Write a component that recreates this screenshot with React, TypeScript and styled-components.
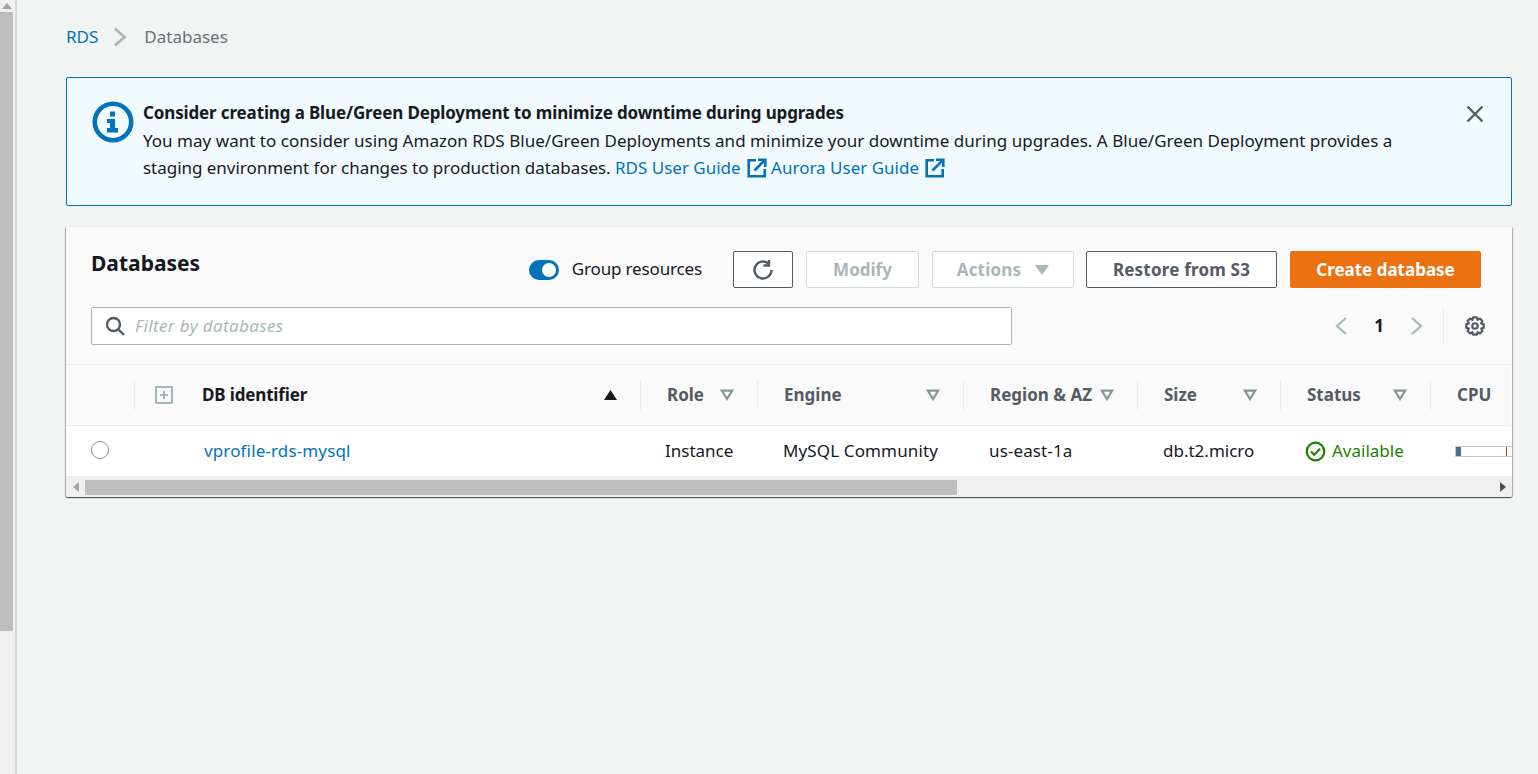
import React from "react";
import styled, { createGlobalStyle } from "styled-components";

const GlobalStyle = createGlobalStyle`
	html, body {
		margin: 0;
		height: 100%;
		overflow: hidden;
		background: #ffffff;
		font-family: "Noto Sans", "Liberation Sans", sans-serif;
		font-size: 17px;
		color: #16191f;
	}
`;

const Shell = styled.div`
	display: flex;
	width: 1538px;
	height: 774px;
`;
const PageScroll = styled.div`
	width: 15px;
	flex: none;
	display: flex;
	flex-direction: column;
	background: #f0f0f0;
`;
const ScrollArrow = styled.div`
	height: 12px;
	width: 13px;
	display: flex;
	align-items: center;
	justify-content: center;
`;
const ScrollThumb = styled.div`
	width: 13px;
	height: 619px;
	background: #bebebe;
`;
const Gutter = styled.div`
	width: 2px;
	flex: none;
	background: #d9d9d9;
`;
const Main = styled.main`
	flex: 1;
	background: #f2f3f3;
	padding: 26px 26px 0 49px;
	box-sizing: border-box;
`;
const Crumbs = styled.nav`
	display: flex;
	align-items: center;
	height: 22px;
	line-height: 22px;
	margin-bottom: 29px;
`;
const Link = styled.a<{ $spacing?: number }>`
	color: #0073bb;
	letter-spacing: ${(p) => p.$spacing ?? 0}px;
`;
const CrumbCurrent = styled.span`
	color: #687078;
	margin-left: 17px;
`;
const CrumbSep = styled.svg`
	margin-left: 15px;
	width: 14px;
	height: 20px;
`;
const Alert = styled.section`
	display: flex;
	height: 129px;
	box-sizing: border-box;
	border: 1px solid #0073bb;
	border-radius: 2px;
	background: #f1faff;
	padding: 23px 26px 0 25px;
	margin-bottom: 20px;
`;
const AlertIcon = styled.svg`
	width: 42px;
	height: 42px;
	flex: none;
	margin-right: 9px;
`;
const AlertBody = styled.div`
	flex: 1;
	line-height: 27px;
	margin-top: -2px;
`;
const AlertTitle = styled.div`
	font-weight: 700;
	line-height: 28px;
	letter-spacing: -0.14px;
`;
const AlertLine = styled.div`
	white-space: nowrap;
`;
const AlertCopy = styled.span<{ $spacing: number }>`
	letter-spacing: ${(p) => p.$spacing}px;
`;
const ExternalIcon = styled.svg`
	width: 20px;
	height: 20px;
	vertical-align: -4px;
	margin-left: 6px;
`;
const CloseIcon = styled.svg`
	width: 20px;
	height: 20px;
	flex: none;
	margin-top: 3px;
`;
const Panel = styled.section`
	height: 271px;
	box-sizing: border-box;
	background: #ffffff;
	border-radius: 2px;
	box-shadow: 0 1px 1px 0 rgba(0, 28, 36, 0.5), 1px 1px 1px 0 rgba(0, 28, 36, 0.3), -1px 1px 1px 0 rgba(0, 28, 36, 0.3);
	overflow: hidden;
	display: flex;
	flex-direction: column;
`;
const PanelHead = styled.header`
	height: 139px;
	flex: none;
	box-sizing: border-box;
	background: #fafafa;
	border-top: 1px solid #eaeded;
	border-bottom: 1px solid #eaeded;
	padding: 24px 31px 0 25px;
`;
const TopRow = styled.div`
	display: flex;
	align-items: flex-start;
	height: 56px;
`;
const Title = styled.h1`
	margin: -2px 0 0;
	font-size: 21px;
	font-weight: 700;
	line-height: 28px;
`;
const Actions = styled.div`
	margin-left: auto;
	display: flex;
	align-items: center;
	height: 37px;
`;
const Toggle = styled.span`
	width: 30px;
	height: 20px;
	border-radius: 10px;
	background: #0073bb;
	display: flex;
	align-items: center;
	justify-content: flex-end;
	padding-right: 3px;
	box-sizing: border-box;
	margin-right: 13px;
	&::after {
		content: "";
		width: 14px;
		height: 14px;
		border-radius: 50%;
		background: #ffffff;
	}
`;
const ToggleLabel = styled.span`
	margin: 0 18px 2px 0;
	color: #16191f;
	letter-spacing: -0.15px;
`;
const Button = styled.button<{ $variant?: "normal" | "disabled" | "primary"; $width: number; $gap?: number; $spacing?: number }>`
	width: ${(p) => p.$width}px;
	height: 37px;
	margin-left: ${(p) => p.$gap ?? 13}px;
	display: flex;
	align-items: center;
	justify-content: center;
	gap: 14px;
	border-radius: 2px;
	font-family: inherit;
	font-size: 17px;
	font-weight: 700;
	letter-spacing: ${(p) => p.$spacing ?? 0}px;
	padding: 0;
	box-sizing: border-box;
	border: 1px solid
		${(p) => (p.$variant === "primary" ? "#ec7211" : p.$variant === "disabled" ? "#d5dbdb" : "#545b64")};
	background: ${(p) => (p.$variant === "primary" ? "#ec7211" : "#ffffff")};
	color: ${(p) => (p.$variant === "primary" ? "#ffffff" : p.$variant === "disabled" ? "#aab7b8" : "#545b64")};
`;
const FilterRow = styled.div`
	display: flex;
	align-items: center;
`;
const Filter = styled.div`
	width: 921px;
	height: 38px;
	box-sizing: border-box;
	border: 1px solid #aab7b8;
	border-radius: 2px;
	background: #ffffff;
	display: flex;
	align-items: center;
	padding-left: 13px;
	gap: 10px;
`;
const Placeholder = styled.span`
	color: #aab7b8;
	font-style: italic;
	letter-spacing: 0.37px;
	margin-bottom: 2px;
`;
const Pager = styled.div`
	margin-left: auto;
	margin-right: -5px;
	display: flex;
	align-items: center;
	height: 38px;
`;
const PageNumber = styled.span`
	font-weight: 700;
	width: 62px;
	text-align: center;
	margin-bottom: 2px;
`;
const PagerRule = styled.span`
	width: 1px;
	height: 38px;
	background: #eaeded;
	margin: 0 20px 0 19px;
`;
const Grid = styled.div`
	display: grid;
	grid-template-columns: 69px 56px 450px 117px 206px 174px 143px 150px 80px;
`;
const HeadCell = styled.div<{ $ruled?: boolean }>`
	height: 61px;
	box-sizing: border-box;
	background: #fafafa;
	border-bottom: 1px solid #eaeded;
	display: flex;
	align-items: center;
	justify-content: space-between;
	padding: 0 ${(p) => (p.$ruled ? 24 : 0)}px 0 26px;
	font-weight: 700;
	color: #545b64;
	position: relative;
	white-space: nowrap;
	&::after {
		content: "";
		display: ${(p) => (p.$ruled ? "block" : "none")};
		position: absolute;
		right: 0;
		top: 15px;
		height: 30px;
		width: 1px;
		background: #eaeded;
	}
`;
const HeadLabel = styled.span`
	margin-bottom: 2px;
`;
const IdentifierHead = styled(HeadCell)`
	color: #16191f;
	padding-left: 11px;
	letter-spacing: -0.15px;
`;
const SelectHead = styled(HeadCell)`
	padding: 0;
`;
const ExpandHead = styled(HeadCell)`
	padding: 0 0 0 20px;
`;
const BodyCell = styled.div<{ $spacing?: number; $inset?: number }>`
	height: 51px;
	box-sizing: border-box;
	border-bottom: 1px solid #eaeded;
	display: flex;
	align-items: center;
	padding: 0 0 2px ${(p) => p.$inset ?? 25}px;
	white-space: nowrap;
	letter-spacing: ${(p) => p.$spacing ?? 0}px;
`;
const Radio = styled.span`
	width: 18px;
	height: 18px;
	box-sizing: border-box;
	border: 1px solid #879596;
	border-radius: 50%;
	background: #ffffff;
`;
const StatusText = styled.span`
	color: #1d8102;
	display: flex;
	align-items: center;
	gap: 6px;
`;
const StatusIcon = styled.svg`
	width: 21px;
	height: 21px;
	margin-top: 3px;
`;
const CpuBar = styled.span`
	width: 60px;
	height: 11px;
	flex: none;
	margin-top: 2px;
	box-sizing: border-box;
	border: 1px solid #c6c6cd;
	background: #ffffff;
	position: relative;
	&::before {
		content: "";
		position: absolute;
		left: 0;
		top: 0;
		bottom: 0;
		width: 5px;
		background: #4a6f94;
	}
	&::after {
		content: "";
		position: absolute;
		left: 50px;
		top: 0;
		bottom: 0;
		width: 1px;
		background: #d13212;
	}
`;
const HScroll = styled.div`
	height: 20px;
	background: #f0f0f0;
	display: flex;
	align-items: center;
	flex: none;
`;
const HArrow = styled.div`
	width: 19px;
	height: 100%;
	flex: none;
	display: flex;
	align-items: center;
	justify-content: center;
`;
const HThumb = styled.div`
	width: 872px;
	height: 15px;
	background: #bebebe;
`;
const HSpace = styled.div`
	flex: 1;
`;

const External = () => (
	<ExternalIcon viewBox="0 0 20 20" fill="none" stroke="#0073bb" strokeWidth="2.6">
		<path d="M9 2.300H1.700v16h16V11" />
		<path d="M7.500 12.500 17.500 2.500M11 1.700h7.300V9" />
	</ExternalIcon>
);

const FilterArrow = () => (
	<svg width="14" height="12" viewBox="0 0 14 12" fill="none" stroke="#879596" strokeWidth="2.2">
		<path d="M1.800 1.600h10.400L7 10z" />
	</svg>
);

const columns = ["Role", "Engine", "Region & AZ", "Size", "Status"];

const App = () => {
	return (
		<>
			<GlobalStyle />
			<Shell>
				<PageScroll>
					<ScrollArrow>
						<svg width="10" height="6" viewBox="0 0 10 6">
							<path d="M5 0l5 6H0z" fill="#a3a3a3" />
						</svg>
					</ScrollArrow>
					<ScrollThumb />
				</PageScroll>
				<Gutter />
				<Main>
					<Crumbs>
						<Link>RDS</Link>
						<CrumbSep viewBox="0 0 14 20" fill="none" stroke="#aab7b8" strokeWidth="2.600">
							<path d="M2 1.500 11.500 10 2 18.500" />
						</CrumbSep>
						<CrumbCurrent>Databases</CrumbCurrent>
					</Crumbs>
					<Alert>
						<AlertIcon viewBox="0 0 42 42">
							<circle cx="21" cy="21" r="18.200" fill="none" stroke="#0073bb" strokeWidth="4.600" />
							<path d="M18 10.500h5v5h-5zM15 18h8v9h3v4.500H15V27h3v-5h-3z" fill="#0073bb" />
						</AlertIcon>
						<AlertBody>
							<AlertTitle>Consider creating a Blue/Green Deployment to minimize downtime during upgrades</AlertTitle>
							<AlertLine>
								<AlertCopy $spacing={0.03}>
									You may want to consider using Amazon RDS Blue/Green Deployments and minimize your downtime during upgrades. A Blue/Green Deployment provides a
								</AlertCopy>
							</AlertLine>
							<AlertLine>
								<AlertCopy $spacing={-0.03}>staging environment for changes to production databases.</AlertCopy>{" "}
								<Link>RDS User Guide<External /></Link>{" "}
								<Link>Aurora User Guide<External /></Link>
							</AlertLine>
						</AlertBody>
						<CloseIcon viewBox="0 0 20 20" fill="none" stroke="#545b64" strokeWidth="2.400">
							<path d="M2.500 2.500 17.500 17.500M17.500 2.500 2.500 17.500" />
						</CloseIcon>
					</Alert>
					<Panel>
						<PanelHead>
							<TopRow>
								<Title>Databases</Title>
								<Actions>
									<Toggle />
									<ToggleLabel>Group resources</ToggleLabel>
									<Button $width={60} aria-label="Refresh">
										<svg width="22" height="22" viewBox="0 0 22 22" fill="none" stroke="#545b64" strokeWidth="2.400">
											<path d="M19.500 11a8.500 8.500 0 1 1-3-6.500" />
											<path d="M17 1v5.500h-5.500" />
										</svg>
									</Button>
									<Button $variant="disabled" $width={113}>Modify</Button>
									<Button $variant="disabled" $width={142} $spacing={0.2}>
										Actions
										<svg width="14" height="10" viewBox="0 0 14 10">
											<path d="M0 0h14L7 10z" fill="#aab7b8" />
										</svg>
									</Button>
									<Button $width={191} $gap={12} $spacing={0.2}>Restore from S3</Button>
									<Button $variant="primary" $width={191}>Create database</Button>
								</Actions>
							</TopRow>
							<FilterRow>
								<Filter>
									<svg width="20" height="20" viewBox="0 0 20 20" fill="none" stroke="#545b64" strokeWidth="2.400">
										<circle cx="8.500" cy="8.500" r="6.500" />
										<path d="M13 13l6 6" />
									</svg>
									<Placeholder>Filter by databases</Placeholder>
								</Filter>
								<Pager>
									<svg width="14" height="20" viewBox="0 0 14 20" fill="none" stroke="#aab7b8" strokeWidth="2.200">
										<path d="M12 2 3 10l9 8" />
									</svg>
									<PageNumber>1</PageNumber>
									<svg width="14" height="20" viewBox="0 0 14 20" fill="none" stroke="#aab7b8" strokeWidth="2.200">
										<path d="M2 2l9 8-9 8" />
									</svg>
									<PagerRule />
									<svg width="22" height="22" viewBox="0 0 24 24" fill="none" stroke="#545b64" strokeWidth="2.400" strokeLinejoin="round">
										<circle cx="12" cy="12" r="3" />
										<path d="M10 2.500h4l.8 2.800 2.600-1.400 2.700 2.700-1.400 2.600 2.800.8v4l-2.800.8 1.400 2.600-2.700 2.700-2.600-1.400-.8 2.800h-4l-.8-2.800-2.600 1.400-2.700-2.700 1.400-2.600-2.800-.8v-4l2.800-.8-1.400-2.600 2.700-2.700 2.600 1.400z" />
									</svg>
								</Pager>
							</FilterRow>
						</PanelHead>
						<Grid>
							<SelectHead $ruled />
							<ExpandHead>
								<svg width="18" height="18" viewBox="0 0 18 18">
									<path d="M1 1h16v16H1z" fill="#fafafa" stroke="#aab7b8" strokeWidth="2" />
									<path d="M9 5v8M5 9h8" stroke="#aab7b8" strokeWidth="2" />
								</svg>
							</ExpandHead>
							<IdentifierHead $ruled>
								<HeadLabel>DB identifier</HeadLabel>
								<svg width="13" height="10" viewBox="0 0 13 10">
									<path d="M6.500 0 13 10H0z" fill="#16191f" />
								</svg>
							</IdentifierHead>
							{columns.map((name) => (
								<HeadCell $ruled key={name}>
									<HeadLabel>{name}</HeadLabel>
									<FilterArrow />
								</HeadCell>
							))}
							<HeadCell><HeadLabel>CPU</HeadLabel></HeadCell>
							<BodyCell><Radio /></BodyCell>
							<BodyCell />
							<BodyCell $inset={13}><Link $spacing={0.14}>vprofile-rds-mysql</Link></BodyCell>
							<BodyCell $inset={24}>Instance</BodyCell>
							<BodyCell $spacing={0.13}>MySQL Community</BodyCell>
							<BodyCell $spacing={0.12}>us-east-1a</BodyCell>
							<BodyCell>db.t2.micro</BodyCell>
							<BodyCell $inset={24}>
								<StatusText>
									<StatusIcon viewBox="0 0 21 21" fill="none" stroke="#1d8102" strokeWidth="2.200">
										<circle cx="10.500" cy="10.500" r="8.800" />
										<path d="M6 10.500l3.200 3.200 5.800-6" />
									</StatusIcon>
									Available
								</StatusText>
							</BodyCell>
							<BodyCell $inset={24}><CpuBar /></BodyCell>
						</Grid>
						<HScroll>
							<HArrow>
								<svg width="6" height="10" viewBox="0 0 6 10"><path d="M6 0v10L0 5z" fill="#a3a3a3" /></svg>
							</HArrow>
							<HThumb />
							<HSpace />
							<HArrow>
								<svg width="6" height="10" viewBox="0 0 6 10"><path d="M0 0v10l6-5z" fill="#505050" /></svg>
							</HArrow>
						</HScroll>
					</Panel>
				</Main>
			</Shell>
		</>
	);
};

export default App;
